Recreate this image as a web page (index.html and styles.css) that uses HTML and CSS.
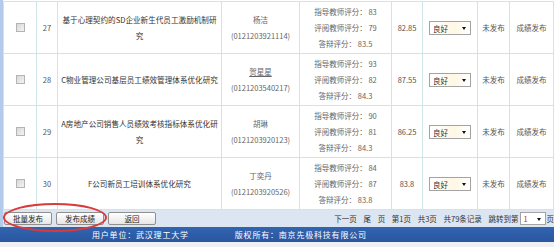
FILE: index.html
```html
<!DOCTYPE html>
<html lang="zh-CN">
<head>
    <meta charset="UTF-8">
    <title>成绩发布</title>
    <link rel="stylesheet" href="styles.css">
</head>
<body>

<div class="page">
    <table class="grid">
        <colgroup>
            <col class="c-check">
            <col class="c-num">
            <col class="c-title">
            <col class="c-student">
            <col class="c-score">
            <col class="c-total">
            <col class="c-grade">
            <col class="c-state">
            <col class="c-action">
        </colgroup>
        <tr>
            <td><input type="checkbox" class="check"></td>
            <td>27</td>
            <td class="title">基于心理契约的SD企业新生代员工激励机制研究</td>
            <td class="student">杨洁<br>(0121203921114)</td>
            <td class="score">指导教师评分： 83<br>评阅教师评分： 79<br>答辩评分： 83.5</td>
            <td>82.85</td>
            <td><span class="pick"><select><option>良好</option></select></span></td>
            <td>未发布</td>
            <td>成绩发布</td>
        </tr>
        <tr>
            <td><input type="checkbox" class="check"></td>
            <td>28</td>
            <td class="title">C物业管理公司基层员工绩效管理体系优化研究</td>
            <td class="student"><u>贺星星</u><br>(0121203540217)</td>
            <td class="score">指导教师评分： 93<br>评阅教师评分： 82<br>答辩评分： 84.3</td>
            <td>87.55</td>
            <td><span class="pick"><select><option>良好</option></select></span></td>
            <td>未发布</td>
            <td>成绩发布</td>
        </tr>
        <tr>
            <td><input type="checkbox" class="check"></td>
            <td>29</td>
            <td class="title">A房地产公司销售人员绩效考核指标体系优化研究</td>
            <td class="student">胡琳<br>(0121203920123)</td>
            <td class="score">指导教师评分： 90<br>评阅教师评分： 81<br>答辩评分： 84.3</td>
            <td>86.25</td>
            <td><span class="pick"><select><option>良好</option></select></span></td>
            <td>未发布</td>
            <td>成绩发布</td>
        </tr>
        <tr>
            <td><input type="checkbox" class="check"></td>
            <td>30</td>
            <td class="title">F公司新员工培训体系优化研究</td>
            <td class="student">丁奕丹<br>(0121203920526)</td>
            <td class="score">指导教师评分： 84<br>评阅教师评分： 87<br>答辩评分： 83.8</td>
            <td>83.8</td>
            <td><span class="pick"><select><option>良好</option></select></span></td>
            <td>未发布</td>
            <td>成绩发布</td>
        </tr>
    </table>

    <div class="button-row">
        <input type="button" value="批量发布" class="btn">
        <input type="button" value="发布成绩" class="btn">
        <input type="button" value="返回" class="btn">
        <div class="pager">
            <span>下一页 尾 页 第1页 共3页 共79条记录 跳转到第</span>
            <span class="pick pick-page"><select><option>1</option></select></span>
            <span>页</span>
        </div>
        <div class="mark"></div>
    </div>
</div>

<div class="footer">
    <span>用户单位：武汉理工大学</span>
    <span>版权所有：南京先极科技有限公司</span>
</div>
<div class="bottom"></div>

</body>
</html>
```

FILE: styles.css
```css
* {
    box-sizing: border-box;
}

html, body {
    margin: 0;
    width: 554px;
    height: 248px;
    overflow: hidden;
    background-color: #ffffff;
    font-family: "Noto Sans CJK SC", sans-serif;
    font-size: 7.5px;
    color: #555555;
}

.page {
    padding-top: 1px;
    border-left: 3px solid #b3cbeb;
}

.grid {
    width: 551px;
    border-collapse: collapse;
    table-layout: fixed;
    border-left: 1px solid #cfe6e8;
}

.grid td {
    height: 52px;
    padding: 1px 2px;
    border: 1px solid #cfe6e8;
    text-align: center;
    vertical-align: middle;
    line-height: 16px;
}

.c-check { width: 33px; }
.c-num { width: 21px; }
.c-title { width: 164px; }
.c-student { width: 78px; }
.c-score { width: 92px; }
.c-total { width: 31px; }
.c-grade { width: 55px; }
.c-state { width: 32px; }
.c-action { width: 44px; }

.grid td.title {
    color: #333333;
    font-size: 7.6px;
    padding: 1px 2px;
}

.grid td.student {
    color: #666666;
}

.grid td.score {
    color: #666666;
}

.check {
    appearance: none;
    display: block;
    margin: 0 auto;
    width: 9px;
    height: 9px;
    border: 1px solid #b4b4b4;
    background: linear-gradient(135deg, #d8d8d8, #f4f4f4);
}

.pick {
    position: relative;
    display: inline-block;
    vertical-align: middle;
}

.pick select {
    appearance: none;
    display: block;
    width: 42px;
    height: 14px;
    padding: 0 0 0 3px;
    border: 1px solid #a3a3a3;
    border-radius: 0;
    background: linear-gradient(to right, #ffffff 10%, #fff7e4 60%, #ffffff);
    font-family: inherit;
    font-size: 7.5px;
    color: #333333;
    outline: none;
}

.pick::after {
    content: "";
    position: absolute;
    right: 5px;
    top: 6px;
    border-left: 2.5px solid transparent;
    border-right: 2.5px solid transparent;
    border-top: 3px solid #111111;
}

.button-row {
    position: relative;
    display: flex;
    align-items: center;
    gap: 4px;
    height: 17px;
    padding-left: 1px;
    background-color: #dce6f3;
}

.btn {
    width: 48px;
    height: 13px;
    padding: 0;
    border: 1px solid #8f8f8f;
    border-radius: 2px;
    background: linear-gradient(#ffffff, #e6e6e6);
    font-family: inherit;
    font-size: 7.5px;
    color: #222222;
}

.pager {
    display: flex;
    align-items: center;
    gap: 1px;
    margin-left: auto;
    color: #333333;
    white-space: nowrap;
    word-spacing: 5px;
}

.pick-page select {
    width: 26px;
    height: 13px;
    color: #cc2222;
    background: #ffffff;
}

.mark {
    position: absolute;
    left: 0;
    top: -7px;
    width: 104px;
    height: 29px;
    border: 2px solid #d93a3a;
    border-radius: 50%;
}

.footer {
    display: flex;
    align-items: center;
    gap: 46px;
    height: 15px;
    padding-left: 92px;
    background: linear-gradient(#3264b0, #2a56a0);
    color: #ffffff;
    font-size: 8px;
    letter-spacing: 0.8px;
}

.bottom {
    height: 5px;
    background-color: #eef0f3;
}
```
